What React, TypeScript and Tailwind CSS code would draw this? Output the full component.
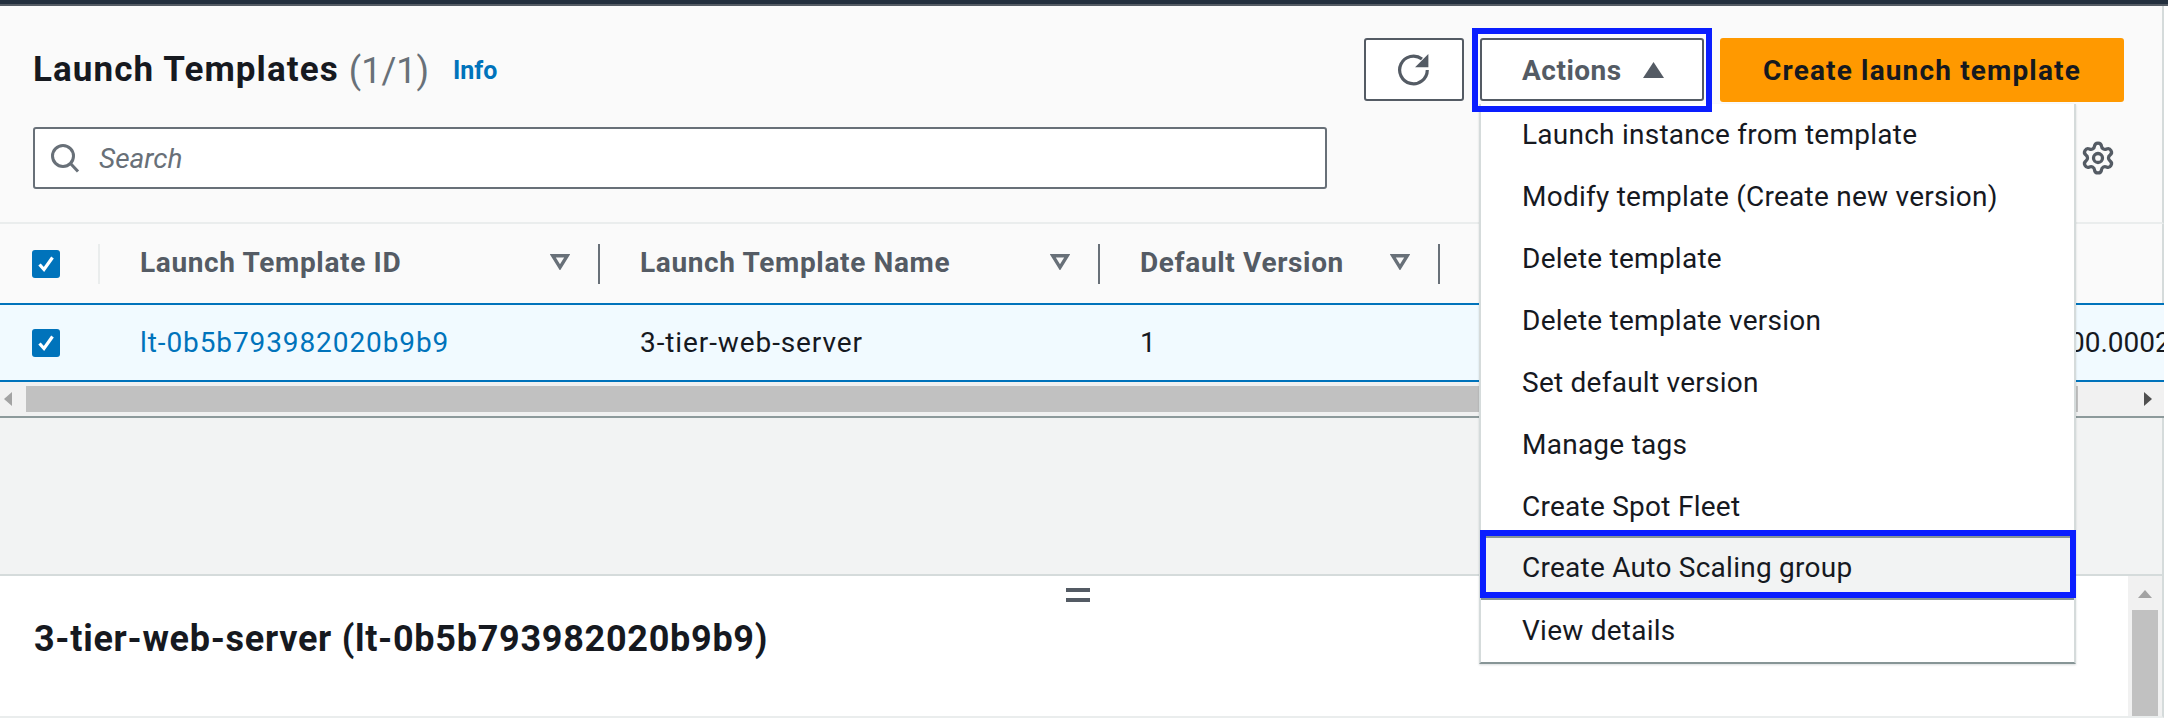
import React from "react";
import { Settings } from "lucide-react";

const items = [
  "Launch instance from template",
  "Modify template (Create new version)",
  "Delete template",
  "Delete template version",
  "Set default version",
  "Manage tags",
  "Create Spot Fleet",
];

function Check() {
  return (
    <span className="flex h-[28px] w-[28px] items-center justify-center rounded-[3px] bg-[#0073bb]">
      <svg width="20" height="20" viewBox="0 0 20 20" fill="none" stroke="#fff" strokeWidth="3.2">
        <path d="M3.5 10.5l4.5 5 8.5-12" />
      </svg>
    </span>
  );
}

function Sort() {
  return (
    <svg width="20" height="16" viewBox="0 0 20 16" fill="none" stroke="#687078" strokeWidth="3.4" className="shrink-0">
      <path d="M2.8 1.8h14.4L10 13.4z" />
    </svg>
  );
}

function HeadCell({ label, w }: { label: string; w: string }) {
  return (
    <div className={`flex items-center pl-[40px] ${w}`}>
      <span className="pb-[2px] font-bold tracking-[0.65px] text-[#545b64]">{label}</span>
      <span className="ml-auto pb-[3px]">
        <Sort />
      </span>
      <span className="ml-[28px] h-[40px] w-[2px] shrink-0 bg-[#687078]" />
    </div>
  );
}

export default function App() {
  return (
    <div className="relative h-[718px] w-[2168px] overflow-hidden bg-white font-['Roboto',sans-serif] text-[28px] text-[#16191f]">
      <div className="h-[4px] bg-[#232f3e]" />
      <div className="h-[2px] bg-[#545b64]" />
      <div className="w-[2164px]">
        <section className="h-[218px] border-r-2 border-b-2 border-r-[#d5dbdb] border-b-[#eaeded] bg-[#fafafa] pt-[32px] pr-[38px] pl-[33px]">
          <div className="flex h-[63px] items-center justify-between">
            <div className="flex items-center pt-[2px]">
              <h1 className="text-[35px] font-bold tracking-[1.1px]">Launch Templates</h1>
              <span className="ml-[10px] text-[36px] text-[#687078]">(1/1)</span>
              <span className="ml-[24px] text-[25px] font-bold text-[#0073bb]">Info</span>
            </div>
            <div className="flex items-center">
              <button className="flex h-[63px] w-[100px] items-center justify-center rounded-[3px] border-2 border-[#545b64] bg-white">
                <svg width="34" height="34" viewBox="0 0 32 32" fill="none">
                  <path d="M28.5 16A13 13 0 1 1 23.5 5.7" stroke="#545b64" strokeWidth="3" />
                  <path d="M17 13.5h12.5V1z" fill="#545b64" />
                </svg>
              </button>
              <button className="relative ml-[16px] flex h-[63px] w-[224px] items-center rounded-[3px] border-2 border-[#545b64] bg-white pl-[40px] font-bold tracking-[0.5px] text-[#545b64]">
                <span className="pt-[2px]">Actions</span>
                <svg width="21" height="16" viewBox="0 0 21 16" className="ml-[21px]" fill="#545b64">
                  <path d="M10.5 0L21 16H0z" />
                </svg>
                <span className="absolute top-[-12px] right-[-10px] bottom-[-13px] left-[-10px] z-10 border-[6px] border-[#0a1eff]" />
              </button>
              <button className="ml-[16px] h-[64px] w-[404px] rounded-[3px] bg-[#ff9900] pt-[2px] font-bold tracking-[1.15px]">Create launch template</button>
            </div>
          </div>
          <div className="mt-[26px] flex items-center justify-between">
            <div className="flex h-[62px] w-[1294px] items-center rounded-[3px] border-2 border-[#687078] bg-white pl-[15px]">
              <svg width="30" height="30" viewBox="0 0 30 30" fill="none" stroke="#687078" strokeWidth="3">
                <circle cx="13" cy="13" r="10.5" />
                <path d="M20.5 20.5l7.5 8" />
              </svg>
              <span className="ml-[19px] pt-[2px] text-[#687078] italic">Search</span>
            </div>
            <Settings size={36} strokeWidth={2.2} color="#545b64" className="mr-[8px]" />
          </div>
        </section>

        <div className="flex h-[79px] border-r-2 border-r-[#d5dbdb] bg-[#fafafa]">
          <div className="flex w-[100px] items-center pl-[32px]">
            <Check />
            <span className="ml-auto h-[40px] w-[2px] bg-[#eaeded]" />
          </div>
          <HeadCell label="Launch Template ID" w="w-[500px]" />
          <HeadCell label="Launch Template Name" w="w-[500px]" />
          <HeadCell label="Default Version" w="w-[340px]" />
        </div>

        <div className="flex h-[79px] items-center overflow-hidden border-y-2 border-[#0073bb] bg-[#f1faff] tracking-[0.9px]">
          <div className="w-[100px] shrink-0 pl-[32px]">
            <Check />
          </div>
          <span className="w-[500px] shrink-0 pl-[40px] text-[#0073bb]">lt-0b5b793982020b9b9</span>
          <span className="w-[500px] shrink-0 pl-[40px]">3-tier-web-server</span>
          <span className="w-[969px] shrink-0 pl-[40px]">1</span>
          <span className="shrink-0 whitespace-nowrap tracking-[0px]">00.0002Z</span>
        </div>

        <div className="flex h-[34px] items-center bg-[#f1f1f1]">
          <svg width="8" height="14" viewBox="0 0 8 14" className="ml-[4px]" fill="#a3a3a3">
            <path d="M8 0v14L0 7z" />
          </svg>
          <span className="ml-[14px] h-[26px] w-[2052px] bg-[#c1c1c1]" />
          <svg width="8" height="14" viewBox="0 0 8 14" className="ml-[66px]" fill="#505050">
            <path d="M0 0v14l8-7z" />
          </svg>
        </div>
        <div className="h-[2px] bg-[#8d9a9b]" />

        <div className="h-[156px] border-r-2 border-r-[#d5dbdb] bg-[#f2f3f3]" />

        <section className="flex h-[144px] border-t-2 border-r-2 border-b-2 border-t-[#d5dbdb] border-r-[#d5dbdb] border-b-[#eaeded]">
          <div className="flex-1 pl-[34px]">
            <div className="ml-[1032px] flex w-[24px] flex-col gap-[6px] pt-[12px]">
              <span className="h-[4px] bg-[#545b64]" />
              <span className="h-[4px] bg-[#545b64]" />
            </div>
            <h2 className="mt-[10px] text-[36px] font-bold tracking-[0.72px]">3-tier-web-server (lt-0b5b793982020b9b9)</h2>
          </div>
          <div className="flex w-[34px] flex-col items-center bg-[#f1f1f1] pt-[14px]">
            <svg width="14" height="8" viewBox="0 0 14 8" fill="#a3a3a3">
              <path d="M7 0l7 8H0z" />
            </svg>
            <span className="mt-[12px] w-[26px] flex-1 bg-[#c1c1c1]" />
          </div>
        </section>
      </div>

      <div className="absolute top-[104px] left-[1479px] w-[597px] border-x-2 border-b-2 border-x-[#d5dbdb] border-b-[#879596] bg-white tracking-[0.25px] text-[#16191f] shadow-[0_1px_2px_rgba(0,28,36,0.15)]">
        {items.map((t) => (
          <div key={t} className="flex h-[62px] items-center pl-[41px]">
            {t}
          </div>
        ))}
        <div className="relative mt-[-2px] flex h-[64px] items-center border-y-2 border-[#879596] bg-[#f2f3f3] pl-[41px]">
          Create Auto Scaling group
          <span className="absolute top-[-8px] right-[-2px] bottom-0 left-[-1px] border-[6px] border-[#0a1eff]" />
        </div>
        <div className="flex h-[62px] items-center pl-[41px]">View details</div>
      </div>
    </div>
  );
}
